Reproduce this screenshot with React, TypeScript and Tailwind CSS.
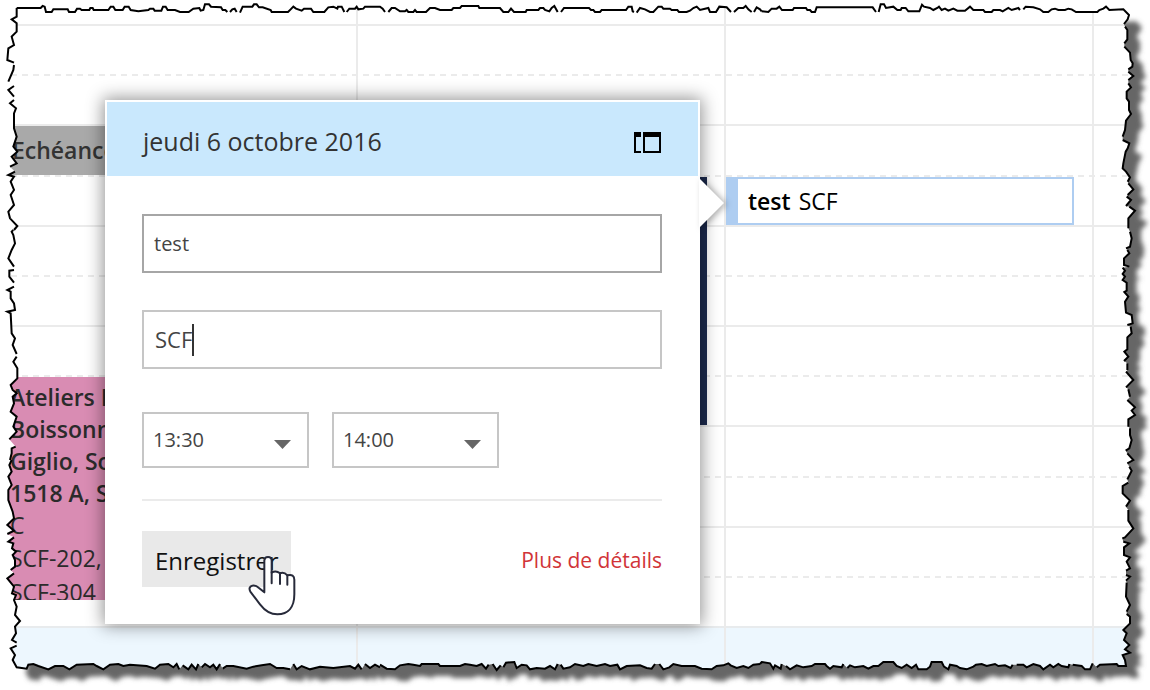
import { useState } from "react";

/* ---- Torn paper frame: each string is one pen stroke, listed clockwise ---- */

type Edge = { dx: number; dy: number; strokes: string[] };

const edges: Edge[] = [
  {
    dx: 0,
    dy: 0,
    strokes: [
      "50,24 122,24 128,18 134,20 138,36 155,36 160,28 203,28 207,36 225,36 231,26 240,26 245,30 268,30 271,24 278,24 281,30 325,30 332,20 340,20 346,30 368,30 374,20 386,20 392,30 415,34 445,30 450,26 460,26 464,32 484,32 489,20 497,20 503,30 525,30 540,36 566,36 580,26 598,24 602,32 610,30 615,13 627,13 633,20 663,22 668,30 676,30 682,36",
      "690,36 697,28 704,26 710,36",
      "720,38 728,20 757,20 762,13 770,13 777,22 788,22 812,30 815,36 864,36 872,28 880,20 888,26 905,32 912,26 933,26 940,36 973,36 985,22 1000,20 1012,26 1014,20 1025,20 1033,36",
      "1040,36 1048,26 1065,26 1070,20 1075,28 1090,26 1095,20 1140,20 1148,26 1155,36",
    ],
  },
  {
    dx: 1140,
    dy: 0,
    strokes: [
      "25,36 35,24 45,24 60,34 75,34 80,30 85,36 100,36 105,30 110,36 138,36 150,24 165,24 180,30 215,30 220,24 240,24 245,18 295,18 298,24 360,24 370,36 385,36 393,26 402,36 437,36 440,30 475,30 480,24 490,24 495,30 508,34 515,24 523,18 533,36",
      "543,36 552,24 627,24 633,30 640,30 645,36 660,36 665,30 738,30 745,20 755,20 758,34 762,36",
      "770,38 780,24 795,28 810,36 820,36 835,20 845,20 850,26 870,26 875,30 892,30 897,36 920,36 930,32 940,24 950,20 960,30 985,24 990,36 1008,36 1018,20 1040,22 1053,36",
      "1062,36 1075,24 1090,24 1097,18 1105,28 1115,36",
      "1122,36 1130,22 1140,28 1145,34",
    ],
  },
  {
    dx: 2280,
    dy: 0,
    strokes: [
      "5,34 25,36 35,26 50,26 58,20 66,30 98,30 102,24 138,24 142,30 150,30 155,36 165,36 170,22 338,22 348,36",
      "356,36 362,13 372,13 378,24 400,20 412,30 422,30 425,24 437,24 445,34 478,34 486,14 492,20 510,24 520,30 532,24 537,20 545,30 555,26 565,32 580,26 592,32 615,32 630,20 640,30 670,30 675,36 695,36 700,30 720,30 728,34 745,24 755,30 775,24 780,30",
      "790,28 797,20 820,22 840,28 850,36 865,36 875,28 885,26 895,30 915,30 925,26 935,28 948,36 1012,36 1018,30 1030,26 1038,20 1048,30 1090,28 1107,45 1103,58 1092,72",
      "1095,80 1102,90 1102,118 1093,130",
      "1093,140 1110,158 1112,180 1118,190 1117,200 1105,208",
      "1105,215 1120,228 1105,240",
      "1105,250 1113,262 1100,275 1100,295 1107,305 1107,330 1113,342 1098,362 1095,390 1088,410",
      "1088,420 1108,430 1103,445 1097,455 1090,490 1088,505 1098,515 1110,532 1103,545",
      "1105,550 1120,568 1103,585",
      "1100,590 1113,600 1098,618",
      "1108,620 1125,632 1105,655 1105,685",
    ],
  },
  {
    dx: 3120,
    dy: 600,
    strokes: [
      "270,95 275,115 270,140 258,145",
      "262,150 268,160 252,175 252,195 268,200",
      "248,203 255,212 248,222 255,230 248,240 260,248 260,272 253,276 265,290 255,305 258,338 275,345 278,370 262,375",
      "272,380 275,400 262,412 262,448 253,455 265,470 252,483",
      "262,490 262,510",
      "258,515 280,540 258,562",
      "265,568 270,590",
      "262,600 285,622 275,632 285,645 265,658 265,680",
      "270,685 270,705 275,720 268,745 257,752",
      "262,760 280,780 262,790",
      "268,800 275,812 262,838",
    ],
  },
  {
    dx: 2280,
    dy: 1380,
    strokes: [
      "1105,68 1088,78 1088,100 1110,122 1098,140",
      "1105,150 1105,182 1120,205 1095,232 1087,235",
      "1090,245 1108,250 1092,262 1092,285 1110,292 1100,305 1110,325 1098,332",
      "1098,345 1110,350 1098,362",
      "1100,368 1098,410 1110,435 1100,455",
      "1100,462 1110,470 1110,490 1090,510 1100,520 1092,540 1108,555 1095,568 1110,578 1088,585 1095,600 1098,618 1075,618 1070,612 1020,614 1010,622",
      "998,610 990,628 975,628 965,618 938,614",
      "928,612 925,622 905,618 895,612 880,622 870,614 850,628 840,618 820,612 800,622 790,614 770,614",
      "758,614 752,624 735,616 715,618 705,612 680,618 665,612 648,614 640,620 620,628 600,624 590,618 570,614 565,628 552,620 545,606 515,606 510,620 500,628 475,628 468,614 455,624 440,614 425,624 410,618 400,606 370,606 355,618 340,618 325,626 310,618 285,622 270,616 262,624",
      "250,612 245,622 220,618 210,626 200,618 195,612 165,612 155,618 130,622 110,616 90,628 78,618",
      "65,612 62,626 45,616 40,626 30,610 5,606 0,612",
    ],
  },
  {
    dx: 1140,
    dy: 1380,
    strokes: [
      "1140,612 1120,614 1105,624 1090,618 1070,624 1052,616 1045,610 1030,616 1010,618 995,628 965,626 945,618 905,618 880,612 868,622 850,628 838,612",
      "825,612 815,626 800,624 780,616 740,618 720,628 712,614 690,618 675,612 650,618 625,612 610,618 585,612 570,622 550,626 542,614",
      "533,612 525,628 510,618 495,626 470,624 450,628 440,616 425,614 410,624 403,606 378,608 370,622",
      "362,616 350,630 338,612",
      "326,614 318,626 305,612 290,618 270,614 255,612 240,618 180,618 175,612 125,612 120,618 100,614 85,612 60,616 45,628 20,626 0,614",
    ],
  },
  {
    dx: 0,
    dy: 1380,
    strokes: [
      "1140,622 1125,614 1110,624 1095,612",
      "1085,628 1075,614 1065,626 1050,618 1000,624 960,620 930,628 905,618 890,628 880,612",
      "870,628 850,624 830,624 810,612 785,616 760,620 740,626 700,618 680,618 668,626",
      "660,612 650,628 640,614 630,622 615,612 605,622",
      "595,612 588,628 575,614 565,628 548,616",
      "538,628 530,612 520,622 505,612 480,614 465,626 440,618 390,614 370,618 355,612 330,614 310,628 290,618 280,612 230,614 208,628 190,618 165,618 145,628 115,618 100,612 85,614 80,626 50,622 38,600 45,585 32,565 50,557",
      "50,548 36,540 48,520 45,500 60,483 45,465 50,440 42,420 48,405 36,400 42,380 22,355 42,340",
      "32,330 45,320 45,300 38,285 48,275 36,265 40,250 25,245 42,232",
      "22,222 42,212 22,195 42,175 38,155 25,120 25,90 35,75 25,50 35,35 28,15 35,0",
    ],
  },
  {
    dx: 0,
    dy: 690,
    strokes: [
      "30,690 35,670 35,655 47,650",
      "28,628 50,605 40,590 50,560 32,545 42,520 38,500 50,490 38,480 32,465 52,445 52,415 40,395 50,380",
      "50,372 38,345 45,325 35,310 32,250 22,245 45,240 42,220 32,205 32,185 22,180 42,170",
      "42,158 28,140 28,122 42,120",
      "42,110 25,85 35,60 45,40 40,15 35,5 40,0",
    ],
  },
  {
    dx: 0,
    dy: 0,
    strokes: [
      "42,690 52,678 30,655 25,635 42,615 32,585 42,570 32,545 42,530 25,525 45,515",
      "30,500 50,490 35,470 52,455 40,440 50,410 42,385 42,340 48,325 30,310 42,300",
      "42,290 25,270 42,258",
      "25,245 40,210 42,195",
      "42,188 22,180 25,145 42,135 35,110 50,95 50,70 35,58 50,50 50,24",
    ],
  },
];

const strokes = edges.flatMap(({ dx, dy, strokes }) =>
  strokes.map((s) =>
    s
      .split(" ")
      .map((p) => {
        const [x, y] = p.split(",").map(Number);
        return `${x + dx},${y + dy}`;
      })
      .join(" "),
  ),
);
const outline = `M${strokes.join(" ")}Z`;
const outside = `M-90-90H3540V2160H-90Z${outline}`;

function TornFrame() {
  return (
    <svg
      className="pointer-events-none absolute inset-0 z-30 size-full"
      viewBox="0 0 3450 2070"
      preserveAspectRatio="none"
      aria-hidden="true"
    >
      <defs>
        <clipPath id="outside">
          <path d={outside} clipRule="evenodd" />
        </clipPath>
        <filter id="soft" x="-5%" y="-5%" width="110%" height="110%">
          <feGaussianBlur stdDeviation="8" />
        </filter>
      </defs>
      <path d={outside} fill="#fff" fillRule="evenodd" />
      <g clipPath="url(#outside)">
        <path d={outline} transform="translate(38 36)" fill="#666" filter="url(#soft)" />
      </g>
      {strokes.map((points, i) => (
        <polyline key={i} points={points} fill="none" stroke="#000" strokeWidth="6" />
      ))}
    </svg>
  );
}

/* ---------------------------------- Icons ---------------------------------- */

function PaneIcon() {
  return (
    <svg width="27" height="21" viewBox="0 0 27 21" aria-hidden="true">
      <path d="M0 0H7V5H2V19H7V21H0Z" fill="#000" />
      <path d="M9 0H27V21H9ZM11 5V19H25V5Z" fill="#000" fillRule="evenodd" />
    </svg>
  );
}

function HandCursor() {
  return (
    <svg
      className="pointer-events-none absolute top-[24px] left-[106px]"
      width="48"
      height="62"
      viewBox="744 284 144 186"
      aria-hidden="true"
    >
      <path
        d="M793 396V300Q794 290 804 290Q815 290 815 301V337Q828 329 840 339Q852 334 862 345Q883 340 883 358V402C883 440 865 462 832 462C808 462 793 449 780 432L751 394Q744 380 757 376Q767 374 776 382Z"
        fill="#fff"
        stroke="#272a3a"
        strokeWidth="6"
        strokeLinejoin="round"
      />
      <path
        d="M815 335V369M840 338V371M862 345V373"
        stroke="#272a3a"
        strokeWidth="6"
        strokeLinecap="round"
      />
    </svg>
  );
}

/* --------------------------------- Calendar -------------------------------- */

const slots = [
  "row-start-2",
  "row-start-3",
  "row-start-4",
  "row-start-5",
  "row-start-6",
  "row-start-7",
  "row-start-8",
  "row-start-9",
  "row-start-10",
  "row-start-11",
  "row-start-12",
  "row-start-13",
];
const days = ["col-start-1", "col-start-2", "col-start-3"];

function Calendar() {
  return (
    <section
      aria-label="Calendrier"
      className="grid flex-1 grid-cols-[358fr_368fr_368fr_56fr] grid-rows-[24px_repeat(12,minmax(0,1fr))_64px]"
    >
      {slots.map((row, i) =>
        i % 2 === 0 ? (
          <div key={row} className={`${row} col-span-full col-start-1 border-t-2 border-[#ebebeb]`} />
        ) : (
          <div
            key={row}
            className={`${row} col-span-full col-start-1 bg-[repeating-linear-gradient(90deg,#ebebeb_0_6px,transparent_6px_11px)] bg-[length:100%_2px] bg-no-repeat`}
          />
        ),
      )}
      <div className="col-span-full col-start-1 row-start-14 border-t-2 border-[#e8ebed] bg-[#edf7fe]" />
      {days.map((col) => (
        <div key={col} className={`${col} row-span-full row-start-1 border-r-2 border-[#ebebeb]`} />
      ))}

      <article className="col-start-1 row-start-4 mt-0.5 flex items-center bg-[#a9a9a9] pl-3 text-[23px] leading-8 font-semibold whitespace-nowrap text-[#333]">
        Echéance
      </article>
      <article className="col-start-1 row-span-5 row-start-9 mt-0.5 mb-[26px] overflow-hidden bg-[#d98cb3] pt-1 pl-2.5 text-[23px] leading-8 whitespace-nowrap text-[#2b2b2b] [contain:size]">
        <p className="font-semibold">Ateliers Info</p>
        <p className="font-semibold">Boissonnas</p>
        <p className="font-semibold">Giglio, Sophie</p>
        <p className="font-semibold">1518 A, SCF</p>
        <p>C</p>
        <p className="leading-[34px]">SCF-202,</p>
        <p className="leading-[34px]">SCF-304</p>
      </article>
      <div className="col-start-2 row-span-5 row-start-5 mt-0.5 mr-[19px] border-r-8 border-[#1d2b4f]" />
      <article className="col-start-3 row-start-5 mt-0.5 mr-5 flex items-center gap-2 border-2 border-l-[12px] border-[#aecdf1] bg-white pl-2.5 text-[23px] leading-8 text-black">
        <span className="font-semibold">test</span>
        <span>SCF</span>
      </article>
    </section>
  );
}

/* --------------------------------- Popover --------------------------------- */

function TimeSelect({ label, value }: { label: string; value: string }) {
  return (
    <div className="relative w-[167px]">
      <select
        aria-label={label}
        defaultValue={value}
        className="h-14 w-full appearance-none border-2 border-[#c6c6c6] bg-white pl-[9px] text-xl text-[#444]"
      >
        <option>13:30</option>
        <option>14:00</option>
        <option>14:30</option>
      </select>
      <svg
        className="pointer-events-none absolute top-7 right-[18px]"
        width="17"
        height="9"
        viewBox="0 0 17 9"
        aria-hidden="true"
      >
        <path d="M0 0H17L8.5 9Z" fill="#666" />
      </svg>
    </div>
  );
}

function QuickEvent() {
  const [subject, setSubject] = useState("test");
  const [place, setPlace] = useState("SCF");
  return (
    <form
      className="absolute top-[100px] left-[105px] z-10 w-[595px] border-2 border-white bg-white shadow-[0_0_16px_2px_rgba(0,0,0,0.42)]"
      onSubmit={(e) => e.preventDefault()}
    >
      <svg
        className="absolute top-[76px] -right-[26px] drop-shadow-[3px_1px_3px_rgba(0,0,0,0.3)]"
        width="25"
        height="50"
        viewBox="0 0 25 50"
        aria-hidden="true"
      >
        <path d="M0 0L25 25L0 50Z" fill="#fff" />
      </svg>
      <header className="flex h-[74px] items-center justify-between bg-[#c9e8fd] pt-1.5 pr-[37px] pl-9">
        <h1 className="text-[25px] text-[#333]">jeudi 6 octobre 2016</h1>
        <button type="button" aria-label="Ouvrir">
          <PaneIcon />
        </button>
      </header>
      <div className="pt-[38px] pr-9 pb-[35px] pl-[35px] text-xl text-[#444]">
        <input
          aria-label="Objet"
          value={subject}
          onChange={(e) => setSubject(e.target.value)}
          className="block h-[59px] w-full border-2 border-[#a6a6a6] px-2.5 outline-none"
        />
        <label className="mt-[37px] flex h-[59px] items-center border-2 border-[#c6c6c6] px-[11px] text-[22px]">
          <input
            aria-label="Lieu"
            value={place}
            onChange={(e) => setPlace(e.target.value)}
            className="[field-sizing:content] outline-none"
          />
          <span className="h-8 w-0.5 bg-[#333]" />
        </label>
        <div className="mt-[43px] flex gap-[23px]">
          <TimeSelect label="Début" value="13:30" />
          <TimeSelect label="Fin" value="14:00" />
        </div>
        <hr className="mt-[31px] border-t-2 border-[#ebebeb]" />
        <footer className="mt-[30px] flex items-center justify-between">
          <div className="relative">
            <button
              type="submit"
              className="h-14 w-[149px] bg-[#e9e9e9] pt-1 pl-[13px] text-left text-2xl text-[#111]"
            >
              Enregistrer
            </button>
            <HandCursor />
          </div>
          <a href="#details" className="pt-1 text-[21px] text-[#d13438]">
            Plus de détails
          </a>
        </footer>
      </div>
    </form>
  );
}

export default function App() {
  return (
    <main className="relative flex min-h-screen flex-col overflow-hidden bg-white font-['Open_Sans','Noto_Sans',sans-serif]">
      <Calendar />
      <QuickEvent />
      <TornFrame />
    </main>
  );
}
